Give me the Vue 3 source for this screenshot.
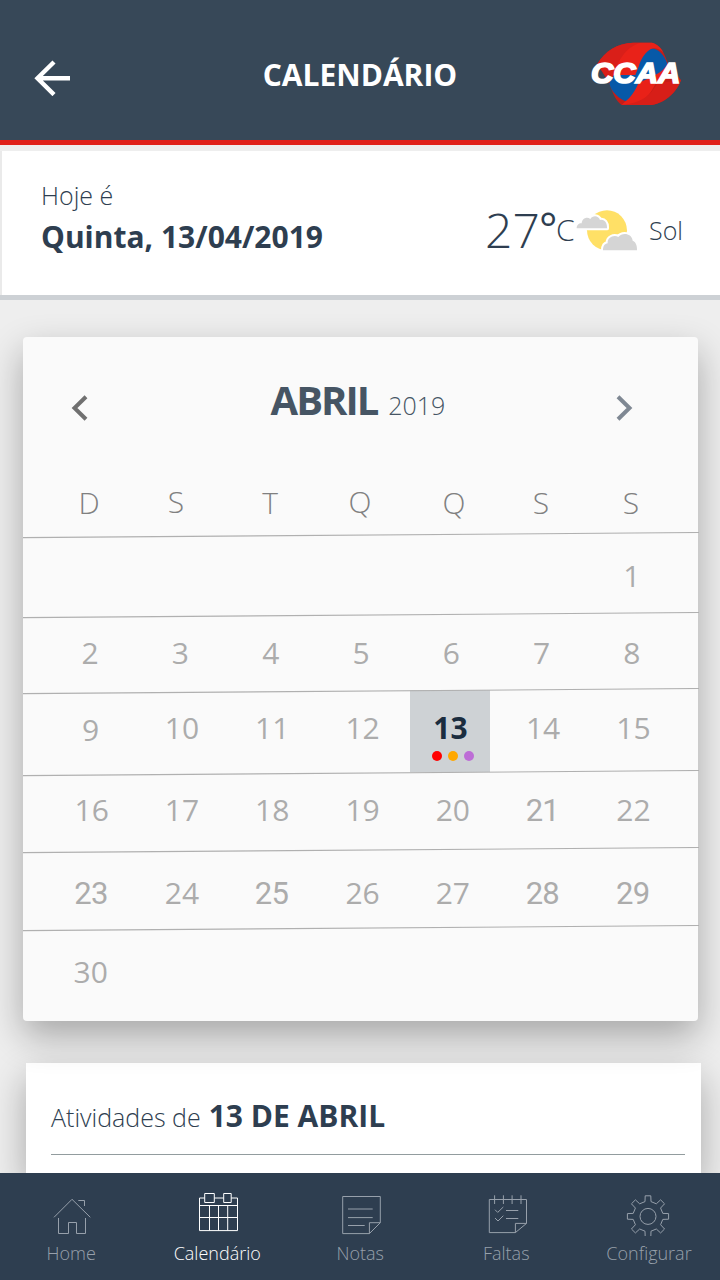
<script setup>
const weekdays = ['D', 'S', 'T', 'Q', 'Q', 'S', 'S']

const weeks = [
  ['', '', '', '', '', '', '1'],
  ['2', '3', '4', '5', '6', '7', '8'],
  ['9', '10', '11', '12', '13', '14', '15'],
  ['16', '17', '18', '19', '20', '21', '22'],
  ['23', '24', '25', '26', '27', '28', '29'],
  ['30', '', '', '', '', '', ''],
]
const today = '13'
const altDays = ['21', '23', '25', '28', '29']

function gearPath(cx, cy, outer, inner, half) {
  const points = []
  for (let i = 0; i < 8; i++) {
    const a = (i * Math.PI) / 4
    const corners = [[-half, inner], [-half + 0.2, outer], [half - 0.2, outer], [half, inner]]
    for (const [x, r] of corners) {
      const px = cx + x * Math.cos(a) + r * Math.sin(a)
      const py = cy + x * Math.sin(a) - r * Math.cos(a)
      points.push(`${px.toFixed(2)} ${py.toFixed(2)}`)
    }
  }
  return `M${points.join('L')}Z`
}

const tabs = [
  {
    label: 'Home',
    paths: ['M6 29.3L24 11.3L42.3 29.3', 'M30.3 12.5H36.5V18', 'M10.5 30V45.5H20.5V34.5H28.5V45.5H37.5V30'],
  },
  {
    label: 'Calendário',
    active: true,
    paths: [
      'M10.7 10H5.5V42.6H43.5V10H37.2M20.3 10H29.7',
      'M10.7 5.5H20.3V14.5H10.7ZM29.7 5.5H37.2V14.5H29.7Z',
      'M5.5 17.5H43.5M5.5 29.5H43.5M15.5 17.5V42.5M24.5 17.5V42.5M33.7 17.5V42.5',
    ],
  },
  {
    label: 'Notas',
    paths: [
      'M5.7 8.5H43.3V34.7L32.4 45.6H5.7Z',
      'M43.3 34.7H32.4V45.6',
      'M11 21H35.7M11 29.6H35.7M11 37.5H27.7',
    ],
  },
  {
    label: 'Faltas',
    paths: [
      'M6.3 11.5H43.5V35.4L32.4 44.6H6.3Z',
      'M43.5 35.4H32.4V44.6',
      'M11.6 7.3V16M20.4 7.3V16M29.1 7.3V16M38 7.3V16',
      'M12 21.7L14.7 24.4L20.3 19M12 30L15 33L20.3 27.7M23 22.5H35.3M23 30.5H35.3',
    ],
  },
  {
    label: 'Configurar',
    paths: [gearPath(24, 28.4, 20.6, 14.8, 3), 'M16 28.4a8 8 0 1 0 16 0a8 8 0 1 0 -16 0'],
  },
]
</script>

<template>
  <div class="screen">
    <header class="topbar">
      <svg class="back" viewBox="0 0 36 36" width="36" height="36">
        <path d="M36 18.3H4M20 2L3.5 18.3L20 34.6" fill="none" stroke="#fff" stroke-width="4.4" />
      </svg>
      <h1 class="title">CALENDÁRIO</h1>
      <svg class="logo" viewBox="60 60 280 200" width="93.33" height="66.67">
        <path d="M82 132C104 94 142 69 190 68H246C268 74 279 91 286 110L294 130L333 180C322 213 288 248 245 255H155C140 246 128 222 118 190Z" fill="#c51d18" />
        <path d="M82 132C104 94 142 69 190 68H215C180 80 158 104 142 140L120 190Z" fill="#d91f19" />
        <path d="M240 86C262 82 283 104 292 131C282 160 240 178 215 195L170 244C150 240 122 215 118 190C130 150 200 110 240 86Z" fill="#0759a8" />
        <path d="M130 165C142 125 170 75 215 68H246C262 72 273 84 280 97C264 83 249 82 238 90C222 102 212 120 206 140L196 165Z" fill="#e92219" />
        <path d="M292 131C280 160 240 170 205 190C196 212 182 234 165 245L155 255H170C205 252 232 236 246 210C262 180 282 160 292 131Z" fill="#e92118" />
        <path d="M262 190L333 180C322 213 288 248 245 255H155C215 250 242 226 262 190Z" fill="#d71e18" />
        <text x="63" y="189" class="logo-text" textLength="268" lengthAdjust="spacingAndGlyphs">CCAA</text>
      </svg>
    </header>

    <section class="today">
      <div class="date">
        <span class="hello">Hoje é</span>
        <strong class="full-date">Quinta, 13/04/2019</strong>
      </div>
      <div class="weather">
        <span class="degrees">27</span>
        <span class="ring">°</span>
        <span class="unit">C</span>
        <svg class="sun" viewBox="345 110 195 140" width="65" height="46.67">
          <circle cx="441" cy="180" r="60" fill="#ffe066" />
          <g stroke="#fff" stroke-width="12" stroke-linejoin="round" paint-order="stroke" fill="#d5d5d5">
            <path d="M350 174C350 163 358 158 365 159C366 145 380 138 391 146C397 135 415 134 420 149C434 146 442 158 441 174Z" />
            <path d="M429 240C429 228 434 220 443 219C441 201 462 192 475 200C486 186 515 188 518 211C527 214 532 226 531 240Z" />
          </g>
        </svg>
        <span class="condition">Sol</span>
      </div>
    </section>

    <main class="calendar">
      <div class="month-bar">
        <svg width="18" height="28" viewBox="0 0 18 28">
          <path d="M15 2.7L3.5 14L15 25.3" fill="none" stroke="#707070" stroke-width="4" />
        </svg>
        <div class="month"><strong class="name">ABRIL</strong><span class="year">2019</span></div>
        <svg width="18" height="28" viewBox="0 0 18 28">
          <path d="M3 2.7L14.5 14L3 25.3" fill="none" stroke="#7f8893" stroke-width="4" />
        </svg>
      </div>
      <div class="weekdays">
        <span v-for="(d, i) in weekdays" :key="i" :class="{ up: i === 1 || i === 3 }">{{ d }}</span>
      </div>
      <div v-for="(week, w) in weeks" :key="w" class="week" :class="'week-' + (w + 1)">
        <svg class="rule" viewBox="0 0 676 7" width="676" height="7">
          <path d="M0 5.6L676 0.5" stroke="#b0b0b0" stroke-width="1.1" />
        </svg>
        <div
          v-for="(day, i) in week"
          :key="i"
          class="day"
          :class="{ selected: day === today, alt: altDays.includes(day), nine: day === '9' }"
        >
          <span>{{ day }}</span>
          <div v-if="day === today" class="dots"><i class="red" /><i class="amber" /><i class="violet" /></div>
        </div>
      </div>
    </main>

    <section class="activities">
      <div class="activities-title">
        <span>Atividades de</span><strong>13 DE ABRIL</strong>
      </div>
    </section>

    <nav class="tabs">
      <a v-for="tab in tabs" :key="tab.label" class="tab" :class="{ active: tab.active }">
        <svg width="48" height="48" viewBox="0 0 48 48">
          <path v-for="(p, i) in tab.paths" :key="i" :d="p" />
        </svg>
        <span>{{ tab.label }}</span>
      </a>
    </nav>
  </div>
</template>

<style>
body {
  margin: 0;
  background: #eee;
}
</style>

<style scoped>
.screen {
  width: 720px;
  height: 1280px;
  overflow: hidden;
  box-sizing: border-box;
  display: flex;
  flex-direction: column;
  background: #eee;
  font-family: "Open Sans", "Noto Sans", sans-serif;
  color: #2e3e50;
}
.screen > * {
  flex-shrink: 0;
}
span,
strong {
  white-space: nowrap;
}
svg {
  display: block;
}
.topbar {
  display: grid;
  grid-template-columns: 1fr auto 1fr;
  height: 140px;
  border-bottom: 5px solid #e0211a;
  background: #374858;
}
.back {
  margin: 60px 0 0 34px;
}
.title {
  margin: 55px 0 0;
  font-size: 30px;
  line-height: 40px;
  font-weight: 700;
  color: #fff;
}
.logo {
  justify-self: end;
  margin: 40px 36.7px 0 0;
}
.logo-text {
  font: italic 700 86px "Liberation Sans", sans-serif;
  fill: #fff;
  stroke: #fff;
  stroke-width: 5;
}
.today {
  display: flex;
  justify-content: space-between;
  margin: 6px 0 0 2px;
  height: 144px;
  background: #fff;
  position: relative;
  box-shadow: -2px 0 #eaeaea, 0 5px #cdd1d5, -2px 5px #cdd1d5;
}
.date {
  display: flex;
  flex-direction: column;
  padding: 28px 0 0 39px;
}
.hello {
  font-size: 25px;
  line-height: 32px;
  font-weight: 300;
}
.full-date {
  font-size: 30px;
  line-height: 40px;
  margin-top: 6px;
}
.weather {
  display: flex;
  align-items: flex-start;
  font-weight: 300;
  width: 235px;
}
.degrees {
  width: 54px;
  font-size: 48px;
  line-height: 60px;
  margin-top: 49px;
}
.ring {
  width: 17px;
  font-size: 43px;
  line-height: 50px;
  font-weight: 400;
  margin-top: 52px;
}
.unit {
  width: 19px;
  font-size: 30px;
  line-height: 40px;
  margin-top: 59px;
}
.sun {
  margin: 55.7px 9px 0 0;
}
.condition {
  font-size: 25px;
  line-height: 32px;
  margin-top: 63px;
}
.calendar {
  position: relative;
  z-index: 1;
  box-sizing: border-box;
  width: 675px;
  height: 684px;
  margin: 42px 0 0 23px;
  border-radius: 4px;
  background: #fafafa;
  box-shadow: 0 15px 36px rgba(0, 0, 0, 0.3);
}
.month-bar {
  display: flex;
  justify-content: space-between;
  align-items: flex-start;
  padding: 57px 65px 0 48px;
  box-sizing: border-box;
  height: 140px;
}
.month {
  display: flex;
  align-items: baseline;
  margin: -22px 0 0 12px;
  line-height: 56px;
  color: #465564;
}
.name {
  font-size: 40px;
  letter-spacing: -2px;
}
.year {
  margin-left: 11px;
  font-size: 25px;
  font-weight: 300;
}
.weekdays {
  display: grid;
  grid-template-columns: 88px 86px 102px 78px 110px 64px 116px;
  height: 55px;
  padding: 6px 0 0 22px;
  box-sizing: border-box;
  font-size: 30px;
  line-height: 40px;
  font-weight: 300;
  text-align: center;
  color: #808080;
}
.weekdays .up {
  margin-top: -1px;
}
.week {
  position: relative;
  display: grid;
  grid-template-columns: repeat(7, 90.3px);
  padding-left: 22px;
  box-sizing: border-box;
  font-size: 30px;
  line-height: 40px;
  text-align: center;
  color: #acacac;
}
.rule {
  position: absolute;
  left: 0;
  top: 0;
}
.week-1 { height: 80px; }
.week-2 { height: 76px; }
.week-3 { height: 82px; padding-left: 23.5px; }
.week-4 { height: 77px; padding-left: 23.5px; }
.week-5 { height: 78px; padding-left: 23.5px; }
.week-6 { height: 96px; padding-left: 22.5px; }
.week-1 .day { padding-top: 24px; }
.week-2 .day { padding-top: 21px; }
.week-3 .day { padding-top: 20px; }
.week-3 .nine { padding-top: 22px; margin-left: -2px; }
.week-4 .day { padding-top: 20px; }
.week-5 .day { padding-top: 26px; }
.week-6 .day { padding-top: 27px; }
.week .alt {
  padding-right: 1.5px;
  font-family: Roboto, sans-serif;
  font-size: 31px;
  letter-spacing: -0.8px;
  line-height: 42px;
}
.week .selected {
  box-sizing: border-box;
  width: 80px;
  height: 82px;
  margin: 2px 0 0 2.3px;
  padding: 18px 0 0 1px;
  background: #ced2d5;
  color: #1b2d3f;
  font-weight: 700;
}
.dots {
  display: flex;
  gap: 6px;
  padding: 3px 0 0 21px;
}
.dots i {
  width: 10px;
  height: 10px;
  border-radius: 50%;
}
.red { background: #f00; }
.amber { background: #ffa800; }
.violet { background: #bd6dd6; }
.activities {
  box-sizing: border-box;
  width: 675px;
  height: 110px;
  margin: 42px 0 0 26px;
  padding: 33px 16px 0 25px;
  position: relative;
  background: #fff;
  box-shadow: 0 15px 36px rgba(0, 0, 0, 0.3);
}
.activities-title {
  display: flex;
  align-items: baseline;
  height: 58px;
  border-bottom: 1px solid #929c9e;
  line-height: 40px;
}
.activities-title span {
  font-size: 25px;
  font-weight: 300;
}
.activities-title strong {
  margin-left: 8px;
  font-size: 30px;
}
.tabs {
  position: relative;
  z-index: 2;
  display: grid;
  grid-template-columns: 144px 148px 138px 154px 128px;
  height: 107px;
  background: #2e3e50;
}
.tab {
  display: flex;
  flex-direction: column;
  align-items: center;
  padding-top: 15px;
  font-size: 18px;
  line-height: 24px;
  font-weight: 300;
  color: #97a0ab;
}
.tab span {
  margin: 5px 1.5px 0 0;
}
.tab:last-child span {
  margin: 5px 0 0 2px;
}
.tab path {
  fill: none;
  stroke: #97a0ab;
  stroke-width: 1;
}
.tab.active {
  color: #fff;
}
.tab.active path {
  stroke: #fff;
}
</style>
